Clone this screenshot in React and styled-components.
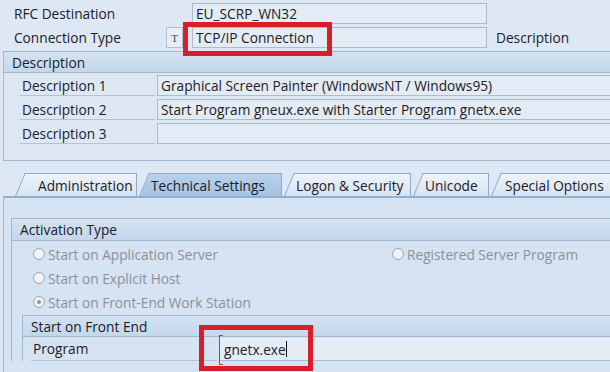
import React from "react";
import styled, { createGlobalStyle } from "styled-components";

const GlobalStyle = createGlobalStyle`
  body {
    margin: 0;
    background: #dce8f4;
  }
`;

const Screen = styled.div`
  position: relative;
  width: 610px;
  height: 372px;
  overflow: hidden;
  background: #dde8f4;
  font-family: "Open Sans", "Liberation Sans", sans-serif;
  font-size: 13.7px;
  color: #1c2026;
`;

const TopForm = styled.div`
  display: flex;
  flex-direction: column;
  gap: 3px;
  padding: 3px 0 0 14px;
`;

const TopRow = styled.div`
  display: grid;
  grid-template-columns: 152px 26px 295px 1fr;
  align-items: center;
  height: 21px;
`;

const Label = styled.div`
  white-space: nowrap;
  padding-left: ${(p) => p.$indent || 0}px;
`;

const Field = styled.div`
  box-sizing: border-box;
  height: 21px;
  display: flex;
  align-items: center;
  padding-left: 3px;
  background: #e3ebf4;
  border: 1px solid #adbccd;
  white-space: nowrap;
  overflow: hidden;
`;

const TypeBox = styled.div`
  box-sizing: border-box;
  width: 17px;
  height: 21px;
  display: flex;
  align-items: center;
  justify-content: center;
  background: #e6edf5;
  border: 1px solid #b2c0cf;
  font-family: "Liberation Serif", serif;
  font-size: 11px;
  color: #444;
`;

const Frame = styled.div`
  margin: ${(p) => p.$margin || "0"};
  border-left: 1px solid #a3b7cd;
  border-top: 1px solid #a3b7cd;
  border-bottom: ${(p) => (p.$closed ? "1px solid #a3b7cd" : "none")};
`;

const FrameHeader = styled.div`
  box-sizing: border-box;
  height: ${(p) => p.$h || 21}px;
  display: flex;
  align-items: center;
  padding-left: 8px;
  background: linear-gradient(#d3e2f1, #c3d7ec);
  border-bottom: 1px solid #a3b7cd;
  white-space: nowrap;
`;

const DescRows = styled.div`
  display: flex;
  flex-direction: column;
  gap: 3px;
  padding: 2px 0 16px 16px;
  margin-right: -20px;
`;

const DescRow = styled.div`
  display: grid;
  grid-template-columns: 135px 1fr;
  column-gap: 2px;
  height: 21px;
`;

const RowLabel = styled.div`
  display: flex;
  align-items: center;
  padding-left: 2px;
  border-bottom: 1px solid #b3c3d5;
  white-space: nowrap;
`;

const TabStrip = styled.div`
  display: flex;
  align-items: flex-end;
  height: 23px;
  margin-top: 12px;
  padding-left: 15px;
`;

const Tab = styled.div`
  position: relative;
  z-index: 0;
  box-sizing: border-box;
  flex: none;
  width: ${(p) => p.$w}px;
  height: 23px;
  margin-left: ${(p) => (p.$first ? 10 : 12)}px;
  padding-left: ${(p) => p.$pad}px;
  display: flex;
  align-items: center;
  white-space: nowrap;
  border-top: 1px solid #8fa9c7;
  border-right: 1px solid #8fa9c7;
  background: ${(p) =>
    p.$active
      ? "linear-gradient(#b9d1ea, #a5c3e3)"
      : "linear-gradient(#eef3f9, #d6e3f1)"};

  &::before {
    content: "";
    position: absolute;
    z-index: -1;
    top: -1px;
    bottom: 0;
    left: -10px;
    width: 18px;
    background: inherit;
    border-top: 1px solid #8fa9c7;
    border-left: 1px solid #8fa9c7;
    transform-origin: bottom left;
    transform: skewX(-23deg);
  }
`;

const Panel = styled.div`
  margin-left: 3px;
  border-top: 2px solid #93afd0;
  border-left: 1px solid #a3b7cd;
  background: #d5e3f2;
  padding: 20px 0 0 7px;
  height: 200px;
`;

const RadioGrid = styled.div`
  display: grid;
  grid-template-columns: 359px 1fr;
  grid-auto-rows: 24px;
  padding: 1px 0 0 21px;
`;

const RadioItem = styled.div`
  display: flex;
  align-items: center;
  gap: 3px;
  color: #8b929a;
  white-space: nowrap;
`;

const RadioCircle = styled.span`
  box-sizing: border-box;
  flex: none;
  width: 12px;
  height: 12px;
  border-radius: 50%;
  border: 1px solid #a1aab4;
  background: radial-gradient(circle, #f1f4f7 40%, #e0e6ec);
  display: flex;
  align-items: center;
  justify-content: center;

  &::after {
    content: "";
    display: ${(p) => (p.$checked ? "block" : "none")};
    width: 4px;
    height: 4px;
    border-radius: 50%;
    background: #8c949d;
  }
`;

const ProgramRow = styled.div`
  display: grid;
  grid-template-columns: 186px 1fr;
  column-gap: 2px;
  height: 24px;
  padding-left: 8px;
`;

const ProgramField = styled.div`
  position: relative;
  display: flex;
  align-items: center;
  margin-top: 1px;
  padding-left: 5px;
  background: #e4edf6;
  border-bottom: 1px solid #a9bacd;
  white-space: nowrap;
`;

const FocusMark = styled.span`
  position: absolute;
  left: 0;
  top: -3px;
  bottom: -5px;
  width: 3px;
  border: 1px solid #b2452a;
  border-right: none;
`;

const Caret = styled.span`
  display: inline-block;
  width: 1px;
  height: 16px;
  background: #111;
`;

const Highlight = styled.div`
  position: absolute;
  left: ${(p) => p.$x}px;
  top: ${(p) => p.$y}px;
  width: ${(p) => p.$w}px;
  height: ${(p) => p.$h}px;
  box-sizing: border-box;
  border: 5px solid #d81e26;
  pointer-events: none;
`;

const descriptions = [
  ["Description 1", "Graphical Screen Painter (WindowsNT / Windows95)"],
  ["Description 2", "Start Program gneux.exe with Starter Program gnetx.exe"],
  ["Description 3", ""],
];

const tabs = [
  { name: "Administration", w: 112, pad: 13 },
  { name: "Technical Settings", w: 133, pad: 2, active: true },
  { name: "Logon & Security", w: 117, pad: 2 },
  { name: "Unicode", w: 66, pad: 2 },
  { name: "Special Options", w: 160, pad: 4 },
];

export default function App() {
  return (
    <Screen>
      <GlobalStyle />
      <TopForm>
        <TopRow>
          <Label>RFC Destination</Label>
          <span />
          <Field>EU_SCRP_WN32</Field>
        </TopRow>
        <TopRow>
          <Label>Connection Type</Label>
          <TypeBox>T</TypeBox>
          <Field>TCP/IP Connection</Field>
          <Label $indent={9}>Description</Label>
        </TopRow>
      </TopForm>

      <Frame $margin="3px 0 0 3px" $closed>
        <FrameHeader>Description</FrameHeader>
        <DescRows>
          {descriptions.map(([label, value]) => (
            <DescRow key={label}>
              <RowLabel>{label}</RowLabel>
              <Field>{value}</Field>
            </DescRow>
          ))}
        </DescRows>
      </Frame>

      <TabStrip>
        {tabs.map((t, i) => (
          <Tab key={t.name} $w={t.w} $pad={t.pad} $active={t.active} $first={i === 0}>
            {t.name}
          </Tab>
        ))}
      </TabStrip>

      <Panel>
        <Frame>
          <FrameHeader $h={22}>Activation Type</FrameHeader>
          <RadioGrid>
            <RadioItem>
              <RadioCircle />
              Start on Application Server
            </RadioItem>
            <RadioItem>
              <RadioCircle />
              Registered Server Program
            </RadioItem>
            <RadioItem>
              <RadioCircle />
              Start on Explicit Host
            </RadioItem>
            <span />
            <RadioItem>
              <RadioCircle $checked />
              Start on Front-End Work Station
            </RadioItem>
          </RadioGrid>
          <Frame $margin="1px 0 0 10px">
            <FrameHeader>Start on Front End</FrameHeader>
            <ProgramRow>
              <RowLabel>Program</RowLabel>
              <ProgramField>
                <FocusMark />
                gnetx.exe
                <Caret />
              </ProgramField>
            </ProgramRow>
          </Frame>
        </Frame>
      </Panel>

      <Highlight $x={183} $y={22} $w={149} $h={34} />
      <Highlight $x={199} $y={325} $w={114} $h={46} />
    </Screen>
  );
}
